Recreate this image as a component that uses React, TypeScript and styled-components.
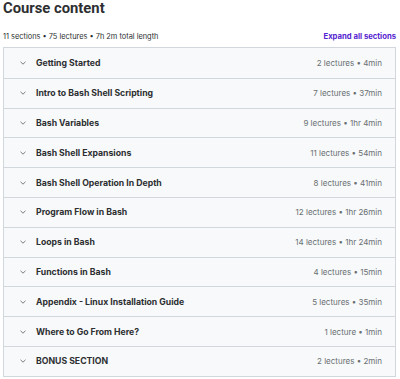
import React from "react";
import styled, { createGlobalStyle } from "styled-components";

const Global = createGlobalStyle`
  html, body { margin: 0; padding: 0; background: #fff; }
  body { font-family: Inter, "Noto Sans", sans-serif; color: #2d2f31; }
`;

const Page = styled.div`
  width: 400px;
  padding: 0 3px 0 3px;
  box-sizing: border-box;
`;

const Title = styled.h2`
  margin: 0;
  font-family: Roboto, Inter, sans-serif;
  font-size: 14.8px;
  font-weight: 700;
  line-height: 17px;
  color: #2d2f31;
`;

const MetaRow = styled.div`
  display: flex;
  justify-content: space-between;
  align-items: center;
  margin-top: 12px;
  height: 14px;
  padding-right: 1px;
`;

const Meta = styled.span`
  font-size: 7.4px;
  color: #2d2f31;
`;

const Expand = styled.button`
  border: none;
  background: none;
  padding: 0;
  font-family: inherit;
  font-size: 7.7px;
  font-weight: 700;
  color: #5624d0;
  cursor: pointer;
`;

const List = styled.div`
  margin-top: 4px;
  border: 1px solid #d1d7dc;
  width: 393px;
  box-sizing: border-box;
`;

const Row = styled.div`
  display: flex;
  align-items: center;
  height: 29.8px;
  background: #f7f9fa;
  padding: 0 13px 0 15px;
  box-sizing: border-box;
  border-top: 1px solid #d1d7dc;
  &:first-child { border-top: none; }
`;

const Chevron = styled.svg`
  width: 8px;
  height: 8px;
  flex: none;
  margin-right: 9px;
`;

const SectionTitle = styled.span`
  flex: 1;
  font-size: 8.7px;
  font-weight: 700;
  color: #2d2f31;
`;

const SectionMeta = styled.span`
  font-size: 8px;
  color: #6a6f73;
`;

const sections: [string, string][] = [
  ["Getting Started", "2 lectures • 4min"],
  ["Intro to Bash Shell Scripting", "7 lectures • 37min"],
  ["Bash Variables", "9 lectures • 1hr 4min"],
  ["Bash Shell Expansions", "11 lectures • 54min"],
  ["Bash Shell Operation In Depth", "8 lectures • 41min"],
  ["Program Flow in Bash", "12 lectures • 1hr 26min"],
  ["Loops in Bash", "14 lectures • 1hr 24min"],
  ["Functions in Bash", "4 lectures • 15min"],
  ["Appendix - Linux Installation Guide", "5 lectures • 35min"],
  ["Where to Go From Here?", "1 lecture • 1min"],
  ["BONUS SECTION", "2 lectures • 2min"],
];

export default function App() {
  return (
    <Page>
      <Global />
      <Title>Course content</Title>
      <MetaRow>
        <Meta>11 sections • 75 lectures • 7h 2m total length</Meta>
        <Expand>Expand all sections</Expand>
      </MetaRow>
      <List>
        {sections.map(([t, m]) => (
          <Row key={t}>
            <Chevron viewBox="0 0 8 8">
              <path d="M1.5 2.8 L4 5.2 L6.5 2.8" fill="none" stroke="#6a6f73" strokeWidth="0.9" />
            </Chevron>
            <SectionTitle>{t}</SectionTitle>
            <SectionMeta>{m}</SectionMeta>
          </Row>
        ))}
      </List>
    </Page>
  );
}
